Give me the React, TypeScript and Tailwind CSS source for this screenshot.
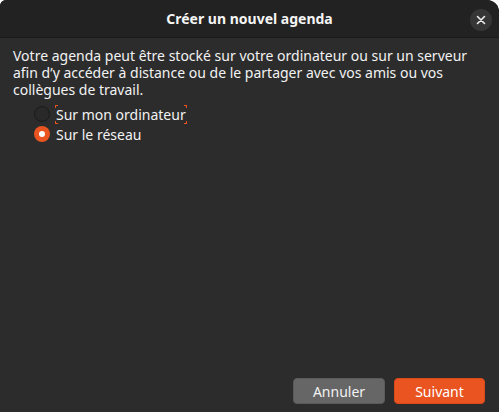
import React, { useState } from 'react';

const FONT = { fontFamily: '"Noto Sans", "Open Sans", sans-serif' };

const Radio: React.FC<{ checked: boolean; label: string; focused?: boolean; onClick: () => void }> = ({ checked, label, focused, onClick }) => (
  <div className="flex items-center h-[20px] cursor-default" onClick={onClick}>
    {checked ? (
      <span className="w-[16px] h-[16px] rounded-full bg-[#e95420] flex items-center justify-center">
        <span className="w-[6px] h-[6px] rounded-full bg-white" />
      </span>
    ) : (
      <span className="w-[16px] h-[16px] rounded-full border border-[#1b1b1b] bg-[#292929]" />
    )}
    <span className="relative ml-[5px] px-[1px] text-[14px] leading-[17px] text-[#f2f2f2]">
      {label}
      {focused && (
        <>
          <span className="absolute left-0 top-[-1px] w-[3px] h-[3px] border-l border-t border-[#e95420]" />
          <span className="absolute right-0 top-[-1px] w-[3px] h-[3px] border-r border-t border-[#e95420]" />
          <span className="absolute left-0 bottom-[-1px] w-[3px] h-[3px] border-l border-b border-[#e95420]" />
          <span className="absolute right-0 bottom-[-1px] w-[3px] h-[3px] border-r border-b border-[#e95420]" />
        </>
      )}
    </span>
  </div>
);

export default function App() {
  const [choice, setChoice] = useState<'local' | 'network'>('network');

  return (
    <div className="w-[499px] h-[412px] bg-white" style={FONT}>
      <div className="w-full h-full flex flex-col bg-[#2c2c2c] rounded-tl-[6px] rounded-tr-[12px] overflow-hidden">
        {/* Header */}
        <div className="h-[38px] shrink-0 bg-[#222222] border-b border-[#1a1a1a] flex items-center justify-center relative">
          <span className="text-[14px] font-bold text-[#f5f5f5]">Créer un nouvel agenda</span>
          <button className="absolute right-[7px] top-[9px] w-[22px] h-[22px] rounded-full bg-[#363636] flex items-center justify-center">
            <svg width="10" height="10" viewBox="0 0 10 10">
              <path d="M1.5 1.5 L8.5 8.5 M8.5 1.5 L1.5 8.5" stroke="#eeeeee" strokeWidth="1.6" strokeLinecap="round" />
            </svg>
          </button>
        </div>

        {/* Body */}
        <div className="flex-1 flex flex-col px-[13px] pt-[9px]">
          <p className="text-[14px] leading-[17px] text-[#f2f2f2]">
            Votre agenda peut être stocké sur votre ordinateur ou sur un serveur afin d’y accéder à distance ou de le partager avec vos amis ou vos collègues de travail.
          </p>
          <div className="flex flex-col pl-[21px] pt-[6px]">
            <Radio checked={choice === 'local'} label="Sur mon ordinateur" focused onClick={() => setChoice('local')} />
            <Radio checked={choice === 'network'} label="Sur le réseau" onClick={() => setChoice('network')} />
          </div>

          <div className="mt-auto mb-[8px] flex justify-end gap-[9px] pr-[1px]">
            <button className="w-[92px] h-[26px] rounded-[4px] bg-[#666666] border border-[#5a5a5a] text-[14px] text-[#f2f2f2]">Annuler</button>
            <button className="w-[91px] h-[26px] rounded-[4px] bg-[#e95420] border border-[#d9491a] text-[14px] text-white">Suivant</button>
          </div>
        </div>
      </div>
    </div>
  );
}
